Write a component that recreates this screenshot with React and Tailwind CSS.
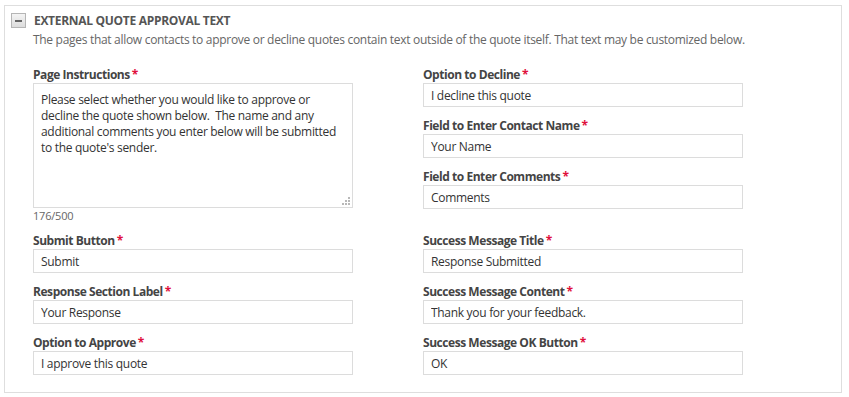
import { useState } from "react";

const leftRows = [
  { label: "Submit Button", value: "Submit" },
  { label: "Response Section Label", value: "Your Response" },
  { label: "Option to Approve", value: "I approve this quote" },
];

const rightTop = [
  { label: "Option to Decline", value: "I decline this quote" },
  { label: "Field to Enter Contact Name", value: "Your Name" },
  { label: "Field to Enter Comments", value: "Comments" },
];

const rightRows = [
  { label: "Success Message Title", value: "Response Submitted" },
  { label: "Success Message Content", value: "Thank you for your feedback." },
  { label: "Success Message OK Button", value: "OK" },
];

const initialText =
  "Please select whether you would like to approve or decline the quote shown below.  The name and any additional comments you enter below will be submitted to the quote's sender.";

function Label({ children }) {
  return (
    <div className="h-[15px] leading-[15px] text-[12px] font-bold tracking-[-0.45px] text-[#444] whitespace-nowrap">
      {children}
      <span className="text-[#e0103c] ml-[2px]">*</span>
    </div>
  );
}

function Field({ label, value }) {
  return (
    <div className="flex flex-col gap-[1px] w-[320px]">
      <Label>{label}</Label>
      <input
        defaultValue={value}
        className="h-[24px] w-[320px] border border-[#dcdcdc] bg-white px-[7px] text-[12px] tracking-[-0.3px] text-[#333] outline-none"
      />
    </div>
  );
}

export default function App() {
  const [text, setText] = useState(initialText);
  const [open, setOpen] = useState(true);

  return (
    <div className="w-[849px] h-[397px] bg-white pt-[5px] pl-[4px] font-['Open_Sans','Noto_Sans',sans-serif]">
      <div className="w-[838px] h-[388px] border border-[#dedede] bg-white">
        {/* header */}
        <div className="flex items-center gap-[8px] pl-[6px] pt-[7px]">
          <button
            onClick={() => setOpen((o) => !o)}
            className="w-[15px] h-[15px] border border-[#b5b5b5] bg-gradient-to-b from-[#f4f4f4] to-[#dcdcdc] flex items-center justify-center"
          >
            <span className="block w-[7px] h-[2px] bg-[#666]" />
          </button>
          <div className="text-[12px] font-bold tracking-[-0.3px] text-[#555] uppercase leading-[15px]">
            External Quote Approval Text
          </div>
        </div>
        <div className="pl-[28px] mt-[4px] text-[12px] leading-[16px] tracking-[-0.3px] text-[#666]">
          The pages that allow contacts to approve or decline quotes contain text outside of the quote itself. That text may be customized below.
        </div>

        {open && (
          <div className="grid grid-cols-[390px_390px] pl-[28px] mt-[19px] gap-y-[11px]">
            <div className="flex flex-col gap-[1px] w-[320px]">
              <Label>Page Instructions</Label>
              <div className="relative">
                <textarea
                  value={text}
                  maxLength={500}
                  onChange={(e) => setText(e.target.value)}
                  className="block h-[125px] w-[320px] resize-none border border-[#dcdcdc] px-[7px] pt-[8px] text-[12px] leading-[16px] tracking-[-0.3px] text-[#333] outline-none"
                />
                {/* resize grip */}
                <svg className="absolute right-[3px] bottom-[3px]" width="8" height="8" viewBox="0 0 8 8">
                  <rect x="6" y="0" width="2" height="2" fill="#b8b8b8" />
                  <rect x="3" y="3" width="2" height="2" fill="#b8b8b8" />
                  <rect x="6" y="3" width="2" height="2" fill="#b8b8b8" />
                  <rect x="0" y="6" width="2" height="2" fill="#b8b8b8" />
                  <rect x="3" y="6" width="2" height="2" fill="#b8b8b8" />
                  <rect x="6" y="6" width="2" height="2" fill="#b8b8b8" />
                </svg>
              </div>
              <div className="text-[11px] leading-[12px] mt-[1px] tracking-[-0.2px] text-[#666]">
                {text.length}/500
              </div>
            </div>
            <div className="flex flex-col gap-[11px]">
              {rightTop.map((f) => (
                <Field key={f.label} {...f} />
              ))}
            </div>
            {leftRows.map((f, i) => (
              <div key={f.label} className="contents">
                <Field {...f} />
                <Field {...rightRows[i]} />
              </div>
            ))}
          </div>
        )}
      </div>
    </div>
  );
}
